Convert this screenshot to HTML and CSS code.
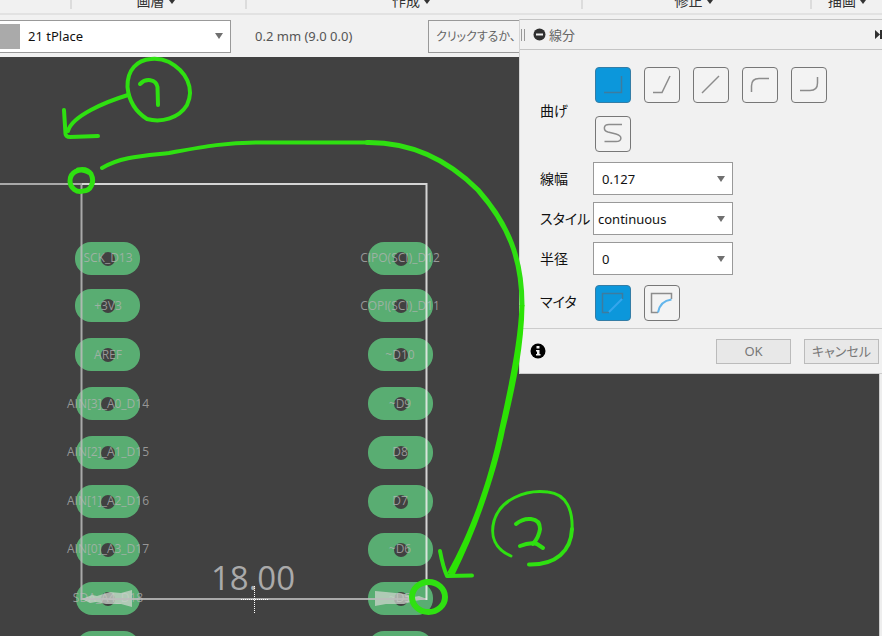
FILE: index.html
```html
<!DOCTYPE html>
<html lang="ja">
<head>
<meta charset="utf-8">
<title>線分</title>
<link rel="stylesheet" href="styles.css">
</head>
<body>
<div class="app">
  <nav class="ribbon">
    <span class="ribbon-group"></span>
    <button class="ribbon-group">画層<i class="caret"></i></button>
    <button class="ribbon-group">作成<i class="caret"></i></button>
    <button class="ribbon-group">修正<i class="caret"></i></button>
    <button class="ribbon-group">描画<i class="caret"></i></button>
  </nav>
  <div class="toolbar">
    <div class="picker layer">
      <span class="swatch"></span>
      <select aria-label="画層"><option>21 tPlace</option></select>
      <i class="arrow"></i>
    </div>
    <output class="coords">0.2 mm (9.0 0.0)</output>
    <input class="command" type="text" aria-label="コマンド" placeholder="クリックするか、">
  </div>
  <main class="stage">
    <svg class="board" width="100%" height="100%">
      <g transform="translate(0 -57)">
        <g class="pads">
          <rect x="75" y="242" width="65" height="33" rx="16"/><rect x="75" y="289" width="65" height="33" rx="16"/>
          <rect x="75" y="338" width="65" height="33" rx="16"/><rect x="76" y="387" width="64" height="33" rx="16"/>
          <rect x="76" y="436" width="64" height="33" rx="16"/><rect x="76" y="485" width="64" height="33" rx="16"/>
          <rect x="76" y="533" width="64" height="33" rx="16"/><rect x="76" y="582" width="64" height="33" rx="16"/>
          <rect x="76" y="631" width="64" height="33" rx="16"/>
          <rect x="368" y="242" width="65" height="33" rx="16"/><rect x="368" y="289" width="65" height="33" rx="16"/>
          <rect x="368" y="338" width="65" height="33" rx="16"/><rect x="368" y="387" width="65" height="33" rx="16"/>
          <rect x="368" y="436" width="65" height="33" rx="16"/><rect x="368" y="485" width="65" height="33" rx="16"/>
          <rect x="368" y="533" width="65" height="33" rx="16"/><rect x="368" y="582" width="65" height="33" rx="16"/>
          <rect x="368" y="631" width="65" height="33" rx="16"/>
        </g>
        <g class="holes">
          <circle cx="108" cy="259" r="7"/><circle cx="108" cy="306" r="7"/><circle cx="108" cy="355" r="7"/><circle cx="108" cy="404" r="7"/>
          <circle cx="108" cy="453" r="7"/><circle cx="108" cy="502" r="7"/><circle cx="108" cy="550" r="7"/><circle cx="108" cy="599" r="7"/>
          <circle cx="401" cy="259" r="7"/><circle cx="401" cy="306" r="7"/><circle cx="401" cy="355" r="7"/><circle cx="401" cy="404" r="7"/>
          <circle cx="401" cy="453" r="7"/><circle cx="401" cy="502" r="7"/><circle cx="401" cy="550" r="7"/><circle cx="401" cy="599" r="7"/>
        </g>
        <g class="pin-names">
          <text x="108" y="262">SCK_D13</text><text x="108" y="310">+3V3</text><text x="108" y="359">AREF</text>
          <text x="108" y="408">AIN[3]_A0_D14</text><text x="108" y="456">AIN[2]_A1_D15</text><text x="108" y="505">AIN[1]_A2_D16</text>
          <text x="108" y="553">AIN[0]_A3_D17</text><text x="108" y="602">SDA_A4_D18</text>
          <text x="400" y="262">CIPO(SCI)_D12</text><text x="400" y="310">COPI(SCI)_D11</text><text x="400" y="359">~D10</text>
          <text x="400" y="408">~D9</text><text x="400" y="456">D8</text><text x="400" y="505">D7</text>
          <text x="400" y="553">~D6</text><text x="400" y="602">~D5</text>
        </g>
        <path class="arrowhead" d="M82 599 92 595 97 596 110 592 121 593 132 590V607L121 604 106 604 96 602 90 603Z"/>
        <path class="arrowhead" d="M427 599 419 596 414 597 405 594 386 592 375 591V606L386 604 404 604 414 601Z"/>
        <g class="outline">
          <path class="dim" d="M0 184H82M81.500 184V599H427"/>
          <path class="bright" d="M82 184H426.500V600"/>
        </g>
        <text class="dimension" x="253" y="590">18.00</text>
        <path class="cursor" d="M241 599.500H269M254.500 586V613"/>
      </g>
    </svg>
    <div class="scroll-edge"></div>
  </main>

  <section class="panel" aria-label="線分">
    <header class="panel-head">
      <span class="grip"></span>
      <svg width="13" height="13" viewBox="0 0 13 13"><circle cx="6.500" cy="6.500" r="6" fill="#303030"/><path d="M3 6.500h7" stroke="#f1f1f1" stroke-width="2"/></svg>
      <h1>線分</h1>
      <svg class="dock" width="7" height="9" viewBox="0 0 7 9"><path d="M0 0 5 4.500 0 9ZM5 0h2v9H5Z" fill="#303030"/></svg>
    </header>
    <div class="fields">
      <span class="label">曲げ</span>
      <div class="tools">
        <button class="tool on" aria-label="直角"><svg viewBox="0 0 36 36"><path d="M9 25.500H26.500V9"/></svg></button>
        <button class="tool" aria-label="斜め"><svg viewBox="0 0 36 36"><path d="M9 25.500H18L26 9"/></svg></button>
        <button class="tool" aria-label="直線"><svg viewBox="0 0 36 36"><path d="M9 26 26 9"/></svg></button>
        <button class="tool" aria-label="円弧 1"><svg viewBox="0 0 36 36"><path d="M9.500 25V19Q9.500 11.500 17 11.500H27"/></svg></button>
        <button class="tool" aria-label="円弧 2"><svg viewBox="0 0 36 36"><path d="M9 23.500H19Q26.500 23.500 26.500 16V10"/></svg></button>
        <button class="tool" aria-label="自由曲線"><svg viewBox="0 0 36 36"><path d="M27 8.500H14C8 8.500 8 14.500 13 16L21 18C28 20 27 25.500 21 25.500H9.500"/></svg></button>
      </div>
      <label class="label" for="w">線幅</label>
      <div class="picker"><select id="w"><option>0.127</option></select><i class="arrow"></i></div>
      <label class="label" for="s">スタイル</label>
      <div class="picker wide"><select id="s"><option>continuous</option></select><i class="arrow"></i></div>
      <label class="label" for="r">半径</label>
      <div class="picker"><select id="r"><option>0</option></select><i class="arrow"></i></div>
      <span class="label">マイタ</span>
      <div class="tools miter">
        <button class="tool on" aria-label="直線マイタ"><svg viewBox="0 0 36 36"><path d="M14 27.500H7.500V8.500H27.500V14"/><path class="blue" d="M14 27 27 14"/></svg></button>
        <button class="tool" aria-label="円弧マイタ"><svg viewBox="0 0 36 36"><path d="M14 27.500H7.500V8.500H27.500V14"/><path class="blue" d="M14 27.500Q16 16 27.500 14.500"/></svg></button>
      </div>
    </div>
    <footer class="panel-foot">
      <svg class="info" width="16" height="16" viewBox="0 0 16 16"><circle cx="8" cy="8" r="7.500"/><path d="M6.500 3h3v2.500h-3zM6 7h3.500v4h1v1.500H6V11h1V8.500H6z" fill="#f1f1f1"/></svg>
      <button class="action">OK</button>
      <button class="action">キャンセル</button>
    </footer>
  </section>

  <svg class="notes" width="100%" height="100%">
    <g stroke-width="4">
      <path d="M151 59C137 60 127 70 127.500 87C129 102 136 112 147 119C162 123 179 118 187 105C195 88 186 71 169 62Q160 58 151 59Z"/>
      <path d="M140 84C146 78 156 79 157.500 87L158 105"/>
      <path d="M128 95C105 102 72 116 68 131"/>
      <path d="M64 110 65.500 134Q66 137 70 137L98 136"/>
      <path d="M102 168C120 157 141 156 169 153C202 147 224 142.500 260 142.500H367"/>
    </g>
    <path stroke-width="5" d="M88 172C80 167 70 172 70 181C70 188 77 193 83 191C91 191 95 182 91 174Q87 168 78 170"/>
    <path stroke-width="5" d="M367 142.500C412 142 449 161 478 190C508 224 522 258 522 305"/>
    <path class="fill" d="M524.500 305C524 350 514 392 505 430C498 466 480 524 454 576L447 573C471 531 489 478 499 430C509 384 518 344 519.500 305Z"/>
    <path stroke-width="4" d="M440 551Q443 567 447 576L472 575.500"/>
    <ellipse stroke-width="6" cx="428.500" cy="597" rx="16.500" ry="15"/>
    <path stroke-width="3" d="M511 556C495 549 490 536 494 521C500 500 525 489 548 492C567 494 573 511 572 530"/>
    <path stroke-width="4" d="M572 529C571 551 556 565 529 564.500M516 524C524 517 540 516 540 529Q539 537 533 544M520 546Q530 542 537 544L543 548"/>
  </svg>
</div>
</body>
</html>
```
FILE: styles.css
```css
* { box-sizing: border-box; }
body { margin: 0; }
.app {
  position: relative;
  display: flex;
  flex-direction: column;
  height: 100vh;
  overflow: hidden;
  background: #f1f1f1;
  color: #111;
  font: 13px/16px "Noto Sans", "Noto Sans CJK JP", sans-serif;
  font-feature-settings: "palt";
}
button, select, input { font: inherit; color: inherit; font-feature-settings: inherit; }

.ribbon {
  display: grid;
  grid-template-columns: 72fr 175fr 336fr 229fr 70fr;
  height: 15px;
  border-bottom: 2px solid #e2e2e2;
}
.ribbon-group {
  display: flex;
  align-items: flex-end;
  justify-content: center;
  gap: 4px;
  height: 9px;
  padding: 0 6px 0 0;
  border: 0;
  border-right: 2px solid #dcdcdc;
  background: none;
  overflow: hidden;
  color: #333;
  font-size: 14px;
  white-space: nowrap;
}
.ribbon-group:last-child { padding: 0; border-right: 0; }
.caret {
  margin-bottom: 5px;
  border: 3px solid transparent;
  border-top: 4px solid #333;
  border-bottom: 0;
}

.toolbar {
  display: flex;
  align-items: center;
  height: 42px;
  flex: none;
}
.picker {
  display: grid;
  grid-template-columns: 1fr;
  align-items: center;
  width: 140px;
  height: 33px;
  border: 1px solid #999;
  background: #fff;
}
.picker > select {
  grid-area: 1 / 1;
  width: 100%;
  height: 100%;
  padding: 0 24px 0 8px;
  border: 0;
  background: none;
  appearance: none;
}
.picker.wide > select { padding-left: 4px; }
.arrow {
  grid-area: 1 / 1;
  justify-self: end;
  margin-right: 7px;
  border: 4px solid transparent;
  border-top: 6px solid #707070;
  border-bottom: 0;
  pointer-events: none;
}
.layer {
  grid-template-columns: 20px 1fr;
  width: 231px;
  border-left: 0;
}
.layer > select, .layer > .arrow { grid-area: 1 / 2; }
.swatch { height: 25px; background: #aaa; }
.coords { width: 173px; margin-left: 24px; color: #555; }
.command {
  width: 180px;
  height: 33px;
  padding: 0 7px;
  border: 1px solid #999;
  background: #f3f3f3;
  font-size: 12px;
}
.command::placeholder { color: #666; opacity: 1; }

.stage {
  display: flex;
  flex: 1;
  min-height: 0;
  background: #414141;
}
.board { flex: 1; min-width: 0; }
.scroll-edge { width: 3px; background: #eee; border-left: 1px solid #ccc; }
.pads { fill: #59ad72; }
.holes { fill: #414141; }
.pin-names {
  fill: #b4b4b4;
  fill-opacity: .75;
  font: 12px "Open Sans", sans-serif;
  text-anchor: middle;
}
.arrowhead { fill: #ccd4cc; fill-opacity: .75; }
.outline { fill: none; stroke-width: 2; }
.dim { stroke: #bcbcbc; stroke-opacity: .85; }
.bright { stroke: #eee; stroke-opacity: .85; }
.dimension {
  fill: #aaa;
  font: 33px "Open Sans", sans-serif;
  text-anchor: middle;
}
.cursor { stroke: #fff; stroke-dasharray: 1 1; }

.panel {
  position: absolute;
  top: 19px;
  right: 0;
  width: 363px;
  border-top: 1px solid #c4c4c4;
  border-bottom: 1px solid #ccc;
  border-left: 1px solid #d4d4d4;
  background: #f1f1f1;
}
.panel-head {
  display: flex;
  align-items: center;
  height: 30px;
  border-bottom: 1px solid #c4c4c4;
}
.grip {
  width: 4px;
  height: 12px;
  margin: 0 8px 0 1px;
  border: 1px solid #999;
  border-width: 0 1px;
}
.panel-head h1 {
  margin: 0 auto 0 3px;
  color: #666;
  font-size: 13px;
  font-weight: 400;
}
.fields {
  display: grid;
  grid-template-columns: 53px 1fr;
  align-items: center;
  row-gap: 7px;
  padding: 17px 16px 7px 20px;
}
.label { font-size: 14px; white-space: nowrap; }
.tools {
  display: flex;
  flex-wrap: wrap;
  gap: 13px;
  padding: 0 0 3px 2px;
}
.miter { padding: 3px 0 0 2px; }
.tool {
  width: 36px;
  height: 36px;
  padding: 0;
  border: 1px solid #777;
  border-radius: 4px;
  background: #f3f3f3;
}
.tool.on { background: #0c97db; border-color: #347da6; }
.tool svg {
  display: block;
  width: 36px;
  height: 36px;
  margin: -1px;
  fill: none;
  stroke: #8c8c8c;
  stroke-width: 1.5;
}
.tool.on svg { stroke: #3d7c9f; }
.tool .blue { stroke: #63b5eb; stroke-width: 2; }
.tool.on .blue { stroke: #36a6ec; }
.panel-foot {
  display: flex;
  align-items: center;
  gap: 13px;
  height: 45px;
  padding: 0 3px 0 10px;
  border-top: 1px solid #ccc;
}
.info { margin-right: auto; }
.action {
  width: 75px;
  height: 25px;
  padding: 0;
  border: 1px solid #bbb;
  background: #e8e8e8;
  color: #777;
}
.notes {
  position: absolute;
  inset: 0;
  fill: none;
  stroke: #2fe011;
  stroke-linecap: round;
  stroke-linejoin: round;
  pointer-events: none;
}
.notes .fill { fill: #2ce305; stroke: none; }
```
